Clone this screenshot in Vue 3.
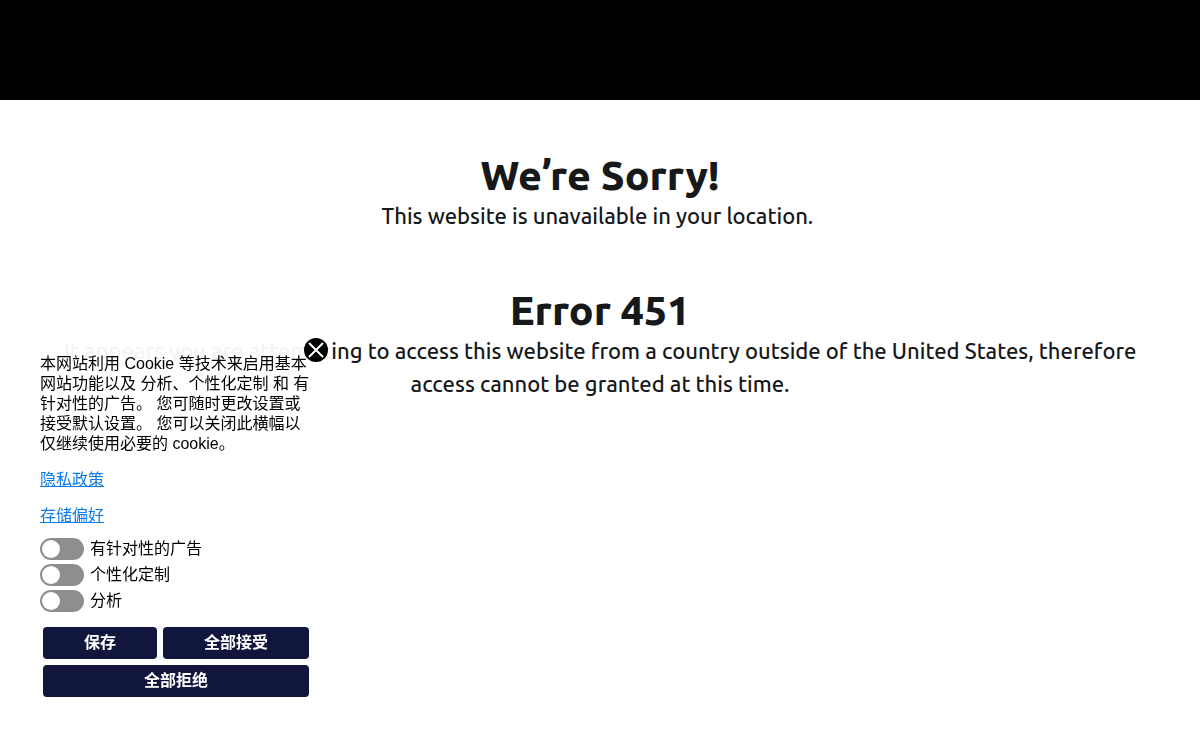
<script setup>
import { ref } from 'vue'

const open = ref(true)
const options = ref([
  { id: 'ads', label: '有针对性的广告', on: false },
  { id: 'personal', label: '个性化定制', on: false },
  { id: 'analytics', label: '分析', on: false },
])

function setAll(value) {
  options.value.forEach((o) => (o.on = value))
  open.value = false
}
</script>

<template>
  <div class="page">
    <header class="top"></header>
    <main class="content">
      <section class="block">
        <h1>We’re Sorry!</h1>
        <p>This website is unavailable in your location.&nbsp;</p>
      </section>
      <section class="block">
        <h1>Error 451</h1>
        <p>
          It appears you are attempting to access this website from a country outside of the United
          States, therefore access cannot be granted at this time.
        </p>
      </section>
    </main>

    <aside v-if="open" class="consent" lang="zh-CN">
      <button class="close" type="button" aria-label="关闭" @click="open = false">
        <svg viewBox="0 0 24 24" width="24" height="24" aria-hidden="true">
          <circle cx="12" cy="12" r="12" fill="#000" />
          <path d="M5 5 19 19M19 5 5 19" stroke="#fff" stroke-width="2" fill="none" />
        </svg>
      </button>
      <p class="text">本网站利用 Cookie 等技术来启用基本网站功能以及 分析、个性化定制 和 有针对性的广告。 您可随时更改设置或接受默认设置。 您可以关闭此横幅以仅继续使用必要的 cookie。</p>
      <p class="text"><a href="#privacy">隐私政策</a></p>
      <p class="text"><a href="#storage">存储偏好</a></p>
      <div class="options">
        <label v-for="o in options" :key="o.id" class="option" :for="o.id">
          <input :id="o.id" v-model="o.on" class="switch" type="checkbox" />
          <span>{{ o.label }}</span>
        </label>
      </div>
      <div class="actions">
        <button class="btn save" type="button" @click="open = false">保存</button>
        <button class="btn accept" type="button" @click="setAll(true)">全部接受</button>
        <button class="btn reject" type="button" @click="setAll(false)">全部拒绝</button>
      </div>
    </aside>
  </div>
</template>

<style>
body {
  margin: 0;
  background: #fff;
}
</style>

<style scoped>
.page {
  font-family: Ubuntu, 'Noto Sans', 'Open Sans', sans-serif;
  color: #161819;
}
.top {
  height: 100px;
  background: #000;
}
.content {
  padding: 51px 50px;
  text-align: center;
}
.block {
  margin-bottom: 54px;
}
.block h1 {
  margin: 0;
  font-size: 41px;
  line-height: 48px;
  font-weight: 800;
}
.block p {
  margin: 0;
  font-size: 22px;
  line-height: 33px;
  font-weight: 500;
}
.consent {
  position: fixed;
  left: 20px;
  bottom: 20px;
  box-sizing: border-box;
  width: 312px;
  padding: 16px 20px 20px;
  background: rgba(255, 255, 255, 0.95);
  color: #000;
  font-family: 'Liberation Sans', 'Noto Sans CJK SC', sans-serif;
  font-size: 16px;
  line-height: 20px;
}
.close {
  position: absolute;
  top: 0;
  right: 4px;
  width: 24px;
  height: 24px;
  padding: 0;
  border: 0;
  background: none;
  cursor: pointer;
}
.close svg {
  display: block;
}
.text {
  margin: 0 0 16px;
}
.text a {
  color: #0b7bec;
  text-decoration: underline;
}
.options {
  display: flex;
  flex-direction: column;
  gap: 4px;
  margin-top: -4px;
}
.option {
  display: flex;
  align-items: center;
  gap: 6px;
  height: 22px;
}
.switch {
  appearance: none;
  box-sizing: border-box;
  width: 44px;
  height: 22px;
  margin: 0;
  padding: 2px;
  border-radius: 11px;
  background: #8e8e8e;
  cursor: pointer;
}
.switch::before {
  content: '';
  display: block;
  width: 18px;
  height: 18px;
  border-radius: 50%;
  background: #fff;
}
.switch:checked {
  background: #11163d;
}
.switch:checked::before {
  margin-left: auto;
}
.actions {
  display: flex;
  flex-wrap: wrap;
  gap: 6px;
  padding: 15px 3px 3px;
}
.btn {
  height: 32px;
  padding: 0 20px;
  border: 0;
  border-radius: 4px;
  background: #11163d;
  color: #fff;
  font-family: inherit;
  font-size: 16px;
  line-height: 20px;
  font-weight: 700;
  cursor: pointer;
}
.save,
.accept {
  flex: 1 1 auto;
}
.reject {
  flex: 1 1 100%;
}
</style>
